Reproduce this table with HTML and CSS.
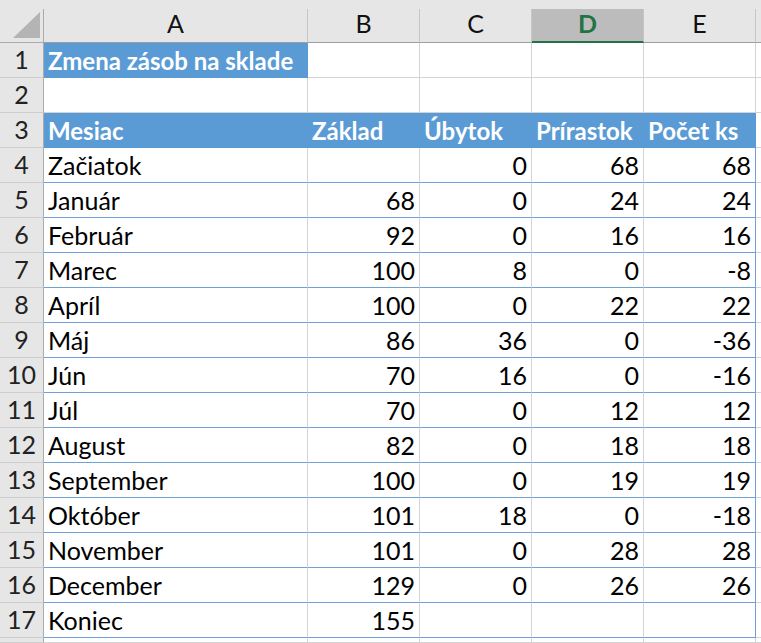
FILE: index.html
```html
<!DOCTYPE html>
<html lang="sk">
<head>
<meta charset="utf-8">
<title>Zmena zásob na sklade</title>
<link rel="stylesheet" href="styles.css">
</head>
<body>
<div class="sheet">
  <div class="strip"></div>

  <div class="c corner"><svg width="27" height="26" viewBox="0 0 27 26"><polygon points="27,0 27,26 0,26" fill="#b4b4b4"/></svg></div>
  <div class="c ch">A</div>
  <div class="c ch">B</div>
  <div class="c ch">C</div>
  <div class="c ch sel">D</div>
  <div class="c ch">E</div>
  <div class="c ch edge"></div>

  <div class="c rh">1</div>
  <div class="c hd">Zmena zásob na sklade</div>
  <div class="c"></div><div class="c"></div><div class="c"></div><div class="c"></div><div class="c"></div>

  <div class="c rh">2</div>
  <div class="c"></div><div class="c"></div><div class="c"></div><div class="c"></div><div class="c"></div><div class="c"></div>

  <div class="c rh">3</div>
  <div class="c hd">Mesiac</div>
  <div class="c hd">Základ</div>
  <div class="c hd">Úbytok</div>
  <div class="c hd">Prírastok</div>
  <div class="c hd">Počet ks</div>
  <div class="c"></div>

  <div class="c rh">4</div>
  <div class="c t">Začiatok</div><div class="c t n"></div><div class="c t n">0</div><div class="c t n">68</div><div class="c t n e">68</div><div class="c"></div>

  <div class="c rh">5</div>
  <div class="c t">Január</div><div class="c t n">68</div><div class="c t n">0</div><div class="c t n">24</div><div class="c t n e">24</div><div class="c"></div>

  <div class="c rh">6</div>
  <div class="c t">Február</div><div class="c t n">92</div><div class="c t n">0</div><div class="c t n">16</div><div class="c t n e">16</div><div class="c"></div>

  <div class="c rh">7</div>
  <div class="c t">Marec</div><div class="c t n">100</div><div class="c t n">8</div><div class="c t n">0</div><div class="c t n e">-8</div><div class="c"></div>

  <div class="c rh">8</div>
  <div class="c t">Apríl</div><div class="c t n">100</div><div class="c t n">0</div><div class="c t n">22</div><div class="c t n e">22</div><div class="c"></div>

  <div class="c rh">9</div>
  <div class="c t">Máj</div><div class="c t n">86</div><div class="c t n">36</div><div class="c t n">0</div><div class="c t n e">-36</div><div class="c"></div>

  <div class="c rh">10</div>
  <div class="c t">Jún</div><div class="c t n">70</div><div class="c t n">16</div><div class="c t n">0</div><div class="c t n e">-16</div><div class="c"></div>

  <div class="c rh">11</div>
  <div class="c t">Júl</div><div class="c t n">70</div><div class="c t n">0</div><div class="c t n">12</div><div class="c t n e">12</div><div class="c"></div>

  <div class="c rh">12</div>
  <div class="c t">August</div><div class="c t n">82</div><div class="c t n">0</div><div class="c t n">18</div><div class="c t n e">18</div><div class="c"></div>

  <div class="c rh">13</div>
  <div class="c t">September</div><div class="c t n">100</div><div class="c t n">0</div><div class="c t n">19</div><div class="c t n e">19</div><div class="c"></div>

  <div class="c rh">14</div>
  <div class="c t">Október</div><div class="c t n">101</div><div class="c t n">18</div><div class="c t n">0</div><div class="c t n e">-18</div><div class="c"></div>

  <div class="c rh">15</div>
  <div class="c t">November</div><div class="c t n">101</div><div class="c t n">0</div><div class="c t n">28</div><div class="c t n e">28</div><div class="c"></div>

  <div class="c rh">16</div>
  <div class="c t">December</div><div class="c t n">129</div><div class="c t n">0</div><div class="c t n">26</div><div class="c t n e">26</div><div class="c"></div>

  <div class="c rh">17</div>
  <div class="c t">Koniec</div><div class="c t n">155</div><div class="c t n"></div><div class="c t n"></div><div class="c t n e"></div><div class="c"></div>

  <div class="c rh"></div>
  <div class="c"></div><div class="c"></div><div class="c"></div><div class="c"></div><div class="c"></div><div class="c"></div>
</div>
</body>
</html>
```
FILE: styles.css
```css
* { box-sizing: border-box; }
html, body {
  margin: 0;
  padding: 0;
  background: #ffffff;
  overflow: hidden;
}
.sheet {
  display: grid;
  grid-template-columns: 44px 264px 112px 112px 112px 112px 5px;
  grid-template-rows: 9px 34px repeat(17, 35px) 5px;
  width: 761px;
  height: 643px;
  font-family: Lato, "Open Sans", sans-serif;
  font-size: 25px;
  color: #000;
}
.strip {
  grid-column: 1 / -1;
  background: #e6e6e6;
}
.c {
  display: flex;
  align-items: flex-end;
  padding: 0 3px 2.5px 4px;
  line-height: 1.2;
  white-space: nowrap;
  overflow: hidden;
  border-right: 1px solid #d4d4d4;
  border-bottom: 1px solid #d4d4d4;
  background: #ffffff;
}
.corner {
  background: #e6e6e6;
  border-right-color: #ababab;
  border-bottom-color: #ababab;
  justify-content: flex-end;
  padding: 0 3px 4px 0;
}
.ch {
  background: #e6e6e6;
  justify-content: center;
  border-right-color: #c6c6c6;
  border-bottom-color: #9e9e9e;
  padding: 0 0 4.5px 0;
  color: #111;
}
.ch.edge { border-right: none; }
.ch.sel {
  background: #bcbcbc;
  color: #217346;
  font-weight: 700;
  border-bottom: 2px solid #217346;
  padding-bottom: 3.5px;
}
.rh {
  background: #e6e6e6;
  justify-content: center;
  border-right-color: #ababab;
  border-bottom-color: #cdcdcd;
  padding: 0 0 3.5px 0;
  color: #222;
}
.hd {
  background: #5b9bd5;
  border-color: #5b9bd5;
  color: #ffffff;
  font-weight: 700;
  font-size: 24px;
  padding-bottom: 1.5px;
}
.t {
  border-bottom-color: #6fa0d8;
}
.n {
  justify-content: flex-end;
  padding-right: 4px;
}
.e {
  border-right-color: #6fa0d8;
}
```
